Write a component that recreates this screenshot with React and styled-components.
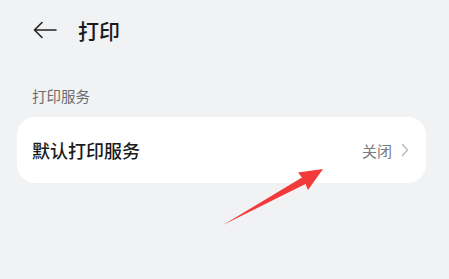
import styled, { createGlobalStyle } from 'styled-components'

const Global = createGlobalStyle`
html, body {
  margin: 0;
  padding: 0;
  background: #f1f2f4;
}
body {
  font-family: "Noto Sans CJK SC", "Noto Sans", sans-serif;
}
`

const Page = styled.div`
position: relative;
width: 449px;
height: 279px;
background: #f1f2f4;
overflow: hidden;
`

const Header = styled.div`
display: flex;
align-items: center;
height: 60px;
padding-left: 32px;
gap: 20px;
`

const Back = styled.svg`
width: 26px;
height: 20px;
`

const Title = styled.div`
font-size: 21px;
color: #1b1b1b;
font-weight: 500;
`

const Section = styled.div`
padding: 25px 0 0 32px;
font-size: 14.5px;
color: #6b6c6e;
height: 32px;
`

const Card = styled.div`
margin: 0 23px 0 17px;
height: 66px;
background: #ffffff;
border-radius: 18px;
display: flex;
align-items: center;
padding: 0 17px 0 15px;
`

const Label = styled.div`
flex: 1;
font-size: 18px;
color: #1b1b1b;
font-weight: 500;
`

const Value = styled.div`
font-size: 15px;
color: #7a7b7d;
margin-right: 9px;
`

const Pointer = styled.svg`
position: absolute;
left: 0;
top: 0;
`

export default function App() {
  return (
    <>
      <Global />
      <Page>
        <Header>
          <Back viewBox="0 0 26 20">
            <path d="M24 10H2.5M10 2.5L2.5 10l7.5 7.5" fill="none" stroke="#222" strokeWidth="1.6" strokeLinecap="round" strokeLinejoin="round" />
          </Back>
          <Title>打印</Title>
        </Header>
        <Section>打印服务</Section>
        <Card>
          <Label>默认打印服务</Label>
          <Value>关闭</Value>
          <svg width="8" height="14" viewBox="0 0 8 14">
            <path d="M1.5 1.5L6.5 7l-5 5.5" fill="none" stroke="#b8b9bb" strokeWidth="1.4" strokeLinecap="round" strokeLinejoin="round" />
          </svg>
        </Card>
        <Pointer width="449" height="279" viewBox="0 0 449 279">
          <path d="M223 225L302 177.5L298 172.5L323 169L308 190L305.5 184Z" fill="#f23a3a" />
        </Pointer>
      </Page>
    </>
  )
}
